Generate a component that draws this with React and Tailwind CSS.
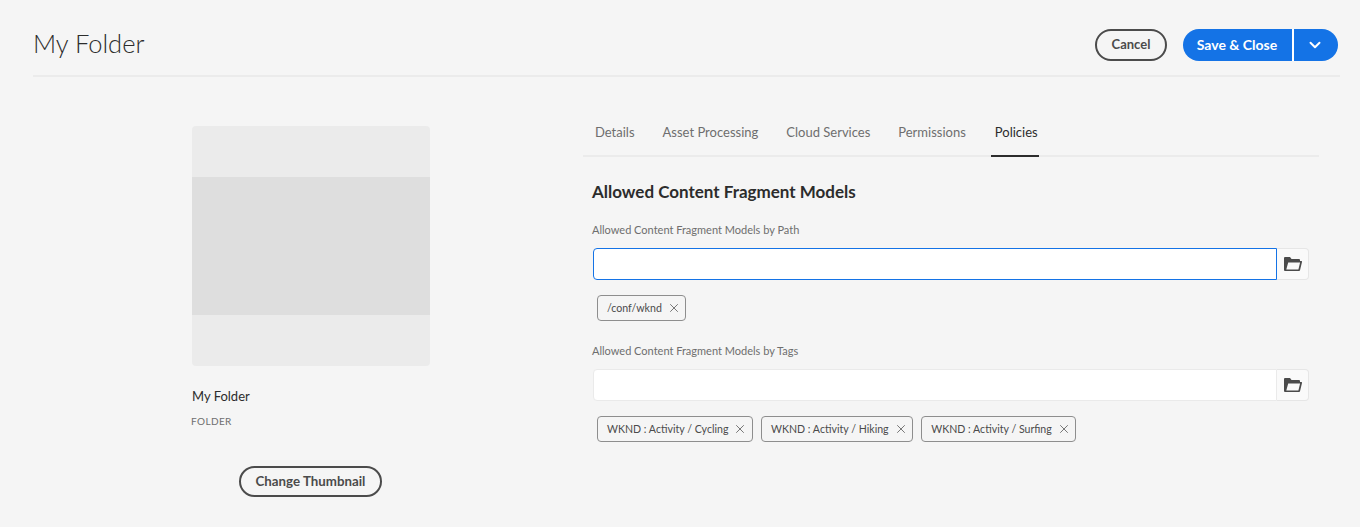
import React from 'react';
import { ChevronDown, X } from 'lucide-react';

const FolderIcon = () => (
  <svg width="18" height="14" viewBox="0 0 18 14" className="text-[#4b4b4b]">
    <path
      fill="currentColor"
      fillRule="evenodd"
      d="M1 0h5l1.5 2H15a1 1 0 0 1 1 1v1h1.2a.8.8 0 0 1 .8 1l-2 8.2a1 1 0 0 1-1 .8H1a1 1 0 0 1-1-1V1a1 1 0 0 1 1-1Zm3.2 5.5L2.3 12.5h12.1l1.7-7H4.2Z"
    />
  </svg>
);

const Tag = ({ label }) => (
  <div className="h-[26px] flex items-center pl-[9px] pr-[4.6px] gap-[5px] border border-[#8e8e8e] rounded-[4px] text-[10.6px] text-[#4b4b4b]">
    <span className="pt-[1px]">{label}</span>
    <X size={14} strokeWidth={1.6} className="text-[#6e6e6e]" />
  </div>
);

const PathField = ({ focused }) => (
  <div className="flex h-[32px] ml-[1px] mr-[10px]">
    <div className={`flex-1 bg-white rounded-l-[4px] ${focused ? 'border border-[#1473e6]' : 'border border-[#eaeaea]'}`} />
    <div className="w-[32px] flex items-center justify-center bg-[#fafafa] border border-l-0 border-[#e6e6e6] rounded-r-[4px]">
      <FolderIcon />
    </div>
  </div>
);

const tabs = ['Details', 'Asset Processing', 'Cloud Services', 'Permissions'];

const App = () => {
  return (
    <div className="w-[1360px] h-[527px] overflow-hidden bg-[#f5f5f5] font-['Lato','Open_Sans',sans-serif] text-[#2c2c2c]">
      {/* Header */}
      <div className="mx-[33px] mr-[20px] h-[77px] pt-[29px] border-b-2 border-[#ebebeb] flex justify-between">
        <h1 className="text-[25.5px] font-light leading-[28px] text-[#2c2c2c]">My Folder</h1>
        <div className="flex items-start pr-[2px]">
          <button className="h-[32px] w-[72px] rounded-full border-2 border-[#4b4b4b] text-[13px] font-bold text-[#4b4b4b]">Cancel</button>
          <button className="h-[32px] w-[109px] ml-[16px] pr-[1px] pb-[2px] rounded-l-full bg-[#1473e6] text-[14px] font-bold text-white">Save &amp; Close</button>
          <button className="h-[32px] w-[46px] border-l-2 border-white rounded-r-full bg-[#1473e6] text-white flex items-center justify-center pr-[2px]">
            <ChevronDown size={18} strokeWidth={2.6} />
          </button>
        </div>
      </div>

      <div className="flex pt-[49px]">
        {/* Thumbnail column */}
        <div className="w-[238px] ml-[192px] flex flex-col">
          <div className="h-[240px] bg-[#ebebeb] rounded-[4px] flex items-center">
            <div className="w-full h-[138px] bg-[#dedede]" />
          </div>
          <div className="mt-[21px] text-[13px] leading-[18px] text-[#2c2c2c]">My Folder</div>
          <div className="mt-[9px] -ml-[1px] text-[10px] leading-[14px] tracking-[0.4px] text-[#6e6e6e]">FOLDER</div>
          <button className="mt-[38px] ml-[47px] w-[143px] h-[31px] rounded-full border-2 border-[#4b4b4b] text-[13.3px] font-bold text-[#4b4b4b]">Change Thumbnail</button>
        </div>

        {/* Properties column */}
        <div className="w-[736px] ml-[153px]">
          <div className="h-[31px] flex border-b-2 border-[#ebebeb] pl-[12px] gap-[28px] text-[13px]">
            {tabs.map((t) => (
              <div key={t} className="text-[#6e6e6e] leading-[12px]">{t}</div>
            ))}
            <div className="relative ml-[1px] text-[#2c2c2c] leading-[12px]">
              Policies
              <div className="absolute left-[-4px] right-[-1px] top-[29px] h-[2px] bg-[#2c2c2c]" />
            </div>
          </div>

          <div className="pl-[9px]">
            <h2 className="mt-[24px] text-[17px] leading-[22px] font-bold text-[#2c2c2c]">Allowed Content Fragment Models</h2>
            <div className="mt-[20px] mb-[11px] text-[11px] leading-[14px] text-[#6e6e6e]">Allowed Content Fragment Models by Path</div>
            <PathField focused />
            <div className="flex gap-[8px] mt-[15px] ml-[5px]">
              <Tag label="/conf/wknd" />
            </div>
            <div className="mt-[23px] mb-[11px] text-[11px] leading-[14px] text-[#6e6e6e]">Allowed Content Fragment Models by Tags</div>
            <PathField />
            <div className="flex gap-[8px] mt-[15px] ml-[5px]">
              <Tag label="WKND : Activity / Cycling" />
              <Tag label="WKND : Activity / Hiking" />
              <Tag label="WKND : Activity / Surfing" />
            </div>
          </div>
        </div>
      </div>
    </div>
  );
};

export default App;
